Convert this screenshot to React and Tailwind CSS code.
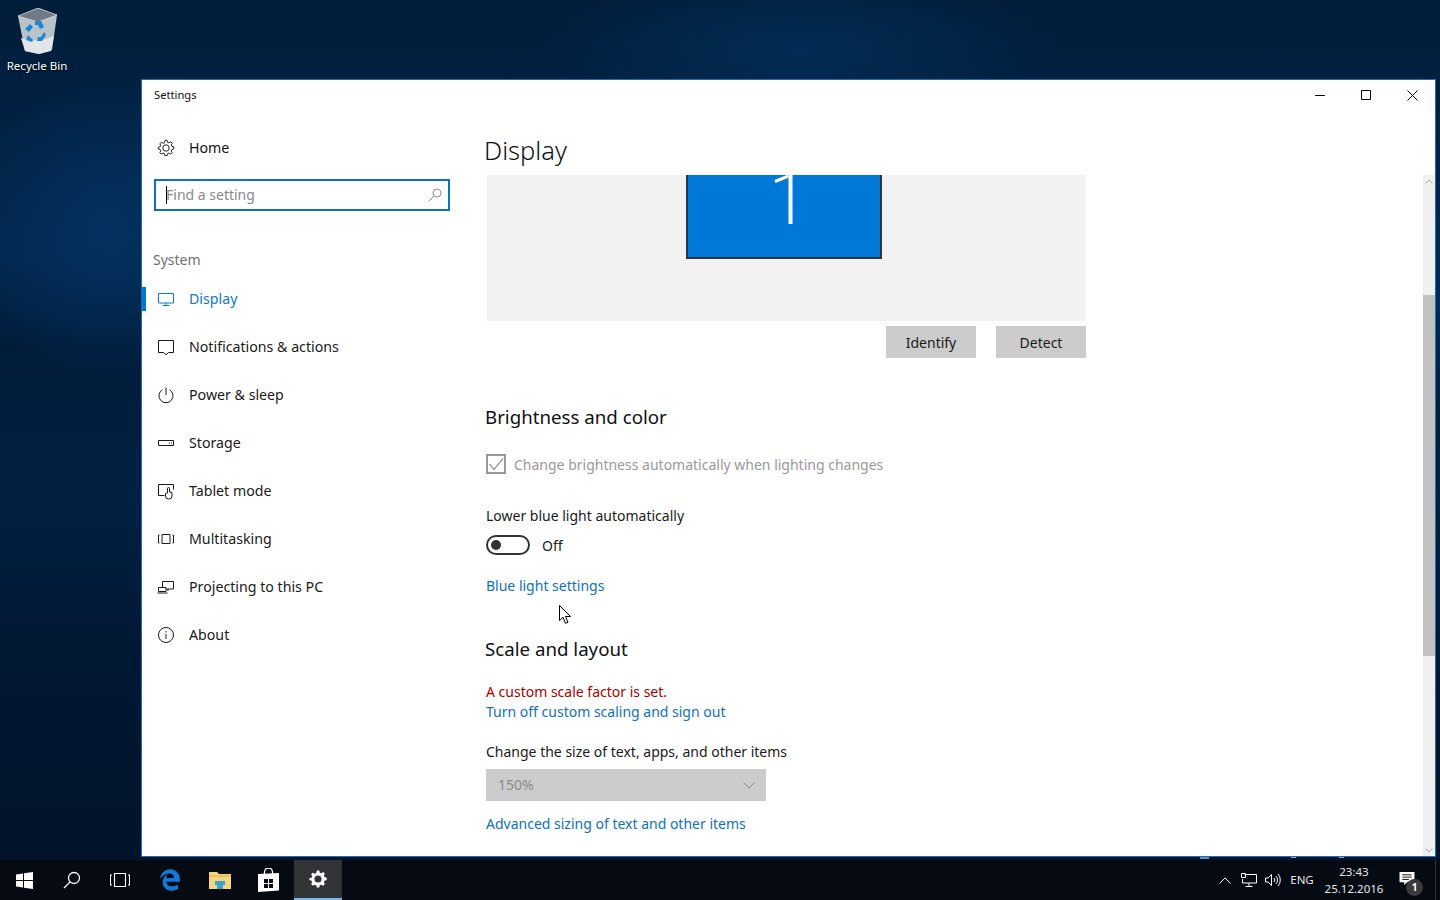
import React from "react";
import { FaEdgeLegacy } from "react-icons/fa";

const S = ({ children, w = 18, h = 18, vb = "0 0 18 18", cls = "" }) => (
  <svg width={w} height={h} viewBox={vb} fill="none" stroke="currentColor" strokeWidth="1" className={cls}>{children}</svg>
);

const gear = "M9 1.2l1.1.1.5 2 1.3.5 1.8-1 1.5 1.4-1 1.8.6 1.3 2 .5v2.2l-2 .5-.6 1.3 1 1.8-1.5 1.5-1.8-1-1.3.5-.5 2H7.9l-.5-2-1.3-.5-1.8 1-1.5-1.5 1-1.8-.6-1.3-2-.5V8.300l2-.5.6-1.300-1-1.800 1.500-1.400 1.800 1 1.300-.5.5-2z";

const icons = {
  display: <S><path d="M1.500 3.500h15v9.500h-15zM9 13v2.500M5.500 15.500h7" /></S>,
  notif: <S><path d="M1.500 2.500h15v12h-5l-2.500 2.200-2.500-2.200h-5z" /></S>,
  power: <S><path d="M9 1.500v7.500M5.500 3.700a7 7 0 1 0 7 0" /></S>,
  storage: <S><path d="M1.500 6.500h15v5h-15z" /><path d="M12 9h1M14 9h1" /></S>,
  tablet: <S><path d="M7.500 13.500h-6v-11h15v5" /><path d="M10.500 11V6.500a1 1 0 0 1 2 0V10l2.500.5v3.500a3 3 0 0 1-3 3h-.500a3 3 0 0 1-3-3v-2.500z" /></S>,
  multi: <S><path d="M5 4.500h8v9H5zM2.500 5h-1v8h1M15.500 5h1v8h-1" /></S>,
  project: <S><path d="M5.500 9V3.500h11V11H9M11 11v2" /><path d="M1.500 9.500h7.500v4H1.500zM.5 15h10" /></S>,
  about: <S><circle cx="9" cy="9" r="7.500" /><path d="M9 8v5M9 5v1.500" /></S>,
};

const nav = [
  ["display", "Display", true], ["notif", "Notifications & actions"], ["power", "Power & sleep"], ["storage", "Storage"],
  ["tablet", "Tablet mode"], ["multi", "Multitasking"], ["project", "Projecting to this PC"], ["about", "About"],
];

function NavItem({ icon, label, active }) {
  return (
    <div className={`relative flex h-12 items-center pl-[15px] text-[14.200px] ${active ? "text-[#0f78c8]" : "text-[#1a1a1a]"}`}>
      {active && <div className="absolute left-0 top-3 h-6 w-1 bg-[#0078d7]" />}
      <div className="flex w-[32px] shrink-0 items-center"><span className="w-[18px]">{icons[icon]}</span></div>
      <span>{label}</span>
    </div>
  );
}

const RecycleBin = () => (
  <svg width="42" height="46" viewBox="0 0 42 46">
    <path d="M2 8L22 0l19 7-5 35-13 4-14-3z" fill="#b9c2c9" />
    <path d="M2 8L22 0l19 7-19 7z" fill="#6f7a84" stroke="#d8dee3" strokeWidth=".7" />
    <path d="M5 30c10 4 22 3 33-2l-3 15-12 3-14-3z" fill="#e2e6e9" />
    <path d="M9 21l5-5 3 3-4 5zM19 13h6l3 6-4 2-2-4-3 0zM28 24l2 3-4 6h-5l1-4h3zM12 27l5 5-1 2-6-2z" fill="#1b86d8" />
  </svg>
);

function Taskbar() {
  return (
    <div className="flex h-10 shrink-0 items-stretch bg-[#050a13] text-white">
      <div className="flex w-12 items-center justify-center">
        <svg width="17" height="17" viewBox="0 0 17 17" fill="#fff"><path d="M0 2.500l7-1v6.500H0zM8 1.300l9-1.300v8H8zM0 9h7v6.500l-7-1zM8 9h9v8l-9-1.300z" /></svg>
      </div>
      <div className="flex w-12 items-center justify-center">
        <svg width="18" height="18" viewBox="0 0 18 18" fill="none" stroke="#fff" strokeWidth="1.300"><circle cx="11" cy="7" r="5.500" /><path d="M7 11l-6 6" /></svg>
      </div>
      <div className="flex w-12 items-center justify-center">
        <svg width="20" height="14" viewBox="0 0 20 14" fill="none" stroke="#fff" strokeWidth="1.100"><path d="M4.500.5h11v13h-11zM2 2H.5v10H2M18 2h1.500v10H18" /></svg>
      </div>
      <div className="flex w-[52px] items-center justify-center text-[#0f7ad8]"><FaEdgeLegacy size={22} /></div>
      <div className="flex w-12 items-center justify-center">
        <svg width="22" height="18" viewBox="0 0 22 18"><path d="M0 1h8l2 2h12v15H0z" fill="#f3d77e" /><path d="M0 4h22v2H0z" fill="#e8c158" /><path d="M6 10h10v4h-2v4H8v-4H6z" fill="#3ba3d4" /></svg>
      </div>
      <div className="flex w-[48px] items-center justify-center">
        <svg width="21" height="24" viewBox="0 0 21 24"><path d="M6.500 6V4a4 4 0 0 1 8 0v2" fill="none" stroke="#fff" strokeWidth="1.300" /><path d="M0 6l21-1v17.500L0 24z" fill="#fff" /><path d="M6 11h4v4H6zM11 11h4v4h-4zM6 16h4v4H6zM11 16h4v4h-4z" fill="#050a13" /></svg>
      </div>
      <div className="ml-[2px] flex w-12 items-center justify-center border-b-2 border-[#76b9ed] bg-[#333437]">
        <svg width="20" height="20" viewBox="0 0 18 18"><path d={gear} fill="#fff" /><circle cx="9" cy="9" r="3.200" fill="#333437" /></svg>
      </div>
      <div className="flex-1" />
      <div className="flex items-center text-[11.500px] text-[#e8e8e8]">
        <svg className="mr-[10px]" width="12" height="7" viewBox="0 0 12 7" fill="none" stroke="#fff"><path d="M.5 6.500l5.500-5.500 5.500 5.500" /></svg>
        <svg className="mr-[8px]" width="16" height="15" viewBox="0 0 16 15" fill="none" stroke="#fff"><path d="M3.500 1.500h12v8.500H1.500V6M8 10v3M4.500 13.500h7M.5.500h4v4h-4z" /></svg>
        <svg className="mr-[9px]" width="16" height="14" viewBox="0 0 16 14" fill="none" stroke="#fff"><path d="M.5 5h2.500l3.500-3.500v11L3 9H.5zM9 5a3 3 0 0 1 0 4M11 3a6 6 0 0 1 0 8M13 1a9 9 0 0 1 0 12" /></svg>
        <span className="mr-[12px] w-[24px] text-center">ENG</span>
        <div className="mr-[13px] flex w-[56px] flex-col items-center pb-[1px] leading-[17px]">
          <span>23:43</span><span>25.12.2016</span>
        </div>
        <div className="relative mr-[15px] h-10 w-[25px]">
          <svg className="absolute left-[4px] top-[12px]" width="16" height="14" viewBox="0 0 16 15"><path d="M0 0h16v11H8l-3 3v-3H0z" fill="#fff" /><path d="M3 3h10M3 5.500h10M3 8h7" stroke="#050a13" /></svg>
          <div className="absolute left-[11px] top-[19px] flex h-[17px] w-[17px] items-center justify-center rounded-full bg-[#3a3a3a] text-[10px] font-bold text-white">1</div>
        </div>
        <div className="h-full w-[5px] border-l border-[#333]" />
      </div>
    </div>
  );
}

const Heading = ({ children, cls }) => <h2 className={`-ml-[1px] text-[18.700px] leading-[28px] text-[#111] ${cls}`}>{children}</h2>;
const Link = ({ children, cls }) => <div className={`leading-[20px] text-[#0f72b8] ${cls}`}>{children}</div>;

export default function App() {
  return (
    <div className="relative flex h-[900px] w-[1440px] flex-col overflow-hidden text-[14px] [font-family:'Noto_Sans','Open_Sans',sans-serif]">
      <div className="relative flex-1 bg-[#011d3a] bg-[radial-gradient(ellipse_150px_150px_at_110px_230px,#03315f_0%,transparent_100%),radial-gradient(ellipse_260px_80px_at_800px_50px,#022c54_0%,transparent_100%),radial-gradient(ellipse_200px_120px_at_1440px_300px,#032b54_0%,transparent_100%),linear-gradient(180deg,#011d3a_0%,#02264c_30%,#011c3a_40%,#012042_58%,#011834_75%,#011329_100%)]">
        <div className="absolute left-0 top-[8px] flex w-[74px] flex-col items-center text-[11.500px] text-white [text-shadow:0_1px_2px_#000]">
          <RecycleBin />
          <span className="mt-[4px] leading-[16px]">Recycle Bin</span>
        </div>

        <div className="absolute left-[141px] top-[79px] flex h-[778px] w-[1295px] flex-col border border-[#1c6eb0] bg-white">
          <div className="flex h-[30px] shrink-0 items-center justify-between pl-[12px] text-[11.200px] text-[#111]">
            <span>Settings</span>
            <div className="flex h-full items-center">
              <div className="flex w-[46px] justify-center"><svg width="10" height="10" viewBox="0 0 10 10" stroke="#000"><path d="M0 5.500h10" /></svg></div>
              <div className="flex w-[46px] justify-center"><svg width="10" height="10" viewBox="0 0 10 10" stroke="#000" fill="none"><path d="M.5.500h9v9h-9z" /></svg></div>
              <div className="flex w-[46px] justify-center"><svg width="11" height="11" viewBox="0 0 11 11" stroke="#000"><path d="M.5.500l10 10M10.500.500l-10 10" /></svg></div>
            </div>
          </div>
          <div className="flex min-h-0 flex-1">
            <aside className="w-[342px] shrink-0 pt-[13px]">
              <div className="flex h-12 items-center pl-[15px] pt-[1px] text-[#111]">
                <svg className="mr-[14px]" width="18" height="18" viewBox="0 0 18 18" fill="none" stroke="#222"><path d={gear} /><circle cx="9" cy="9" r="3.200" /></svg>
                <span className="text-[14.200px]">Home</span>
              </div>
              <div className="ml-[12px] mt-[8px] flex h-8 w-[296px] items-center justify-between border-2 border-[#0f72b8] pl-[10px] pr-[6px] text-[#8a8a8a]">
                <div className="flex items-center"><span className="mr-[-1px] h-[18px] w-px bg-black" /><span className="-mt-[2px]">Find a setting</span></div>
                <svg width="14" height="14" viewBox="0 0 14 14" fill="none" stroke="#8d8d8d"><circle cx="9" cy="5" r="4" /><path d="M6 8l-5.500 5.500" /></svg>
              </div>
              <div className="ml-[11px] mt-[39px] leading-[20px] text-[#707070]">System</div>
              <nav className="mt-[5px]">
                {nav.map(([i, l, a]) => <NavItem key={l} icon={i} label={l} active={a} />)}
              </nav>
            </aside>
            <main className="flex min-w-0 flex-1 flex-col">
              <h1 className="h-[65px] shrink-0 pt-[20px] text-[25.500px] font-light leading-[40px] text-[#111]">Display</h1>
              <div className="flex min-h-0 flex-1">
                <div className="min-w-0 flex-1 overflow-hidden pl-[2px]">
                  <div className="relative ml-[1px] h-[146px] w-[598px] overflow-hidden bg-[#f2f2f2]">
                    <div className="absolute left-[199px] top-[-30px] flex h-[114px] w-[196px] border-2 border-[#2a3744] bg-[#0078d7]">
                      <svg className="ml-[84px] mt-[26px]" width="22" height="51" viewBox="0 0 22 51" fill="none"><path d="M18.500 0v51" stroke="#fff" strokeWidth="4" /><path d="M16.500 3L3 8.500" stroke="#fff" strokeWidth="3" /></svg>
                    </div>
                  </div>
                  <div className="mt-[5px] flex w-[600px] justify-end gap-5">
                    <button className="h-8 w-[90px] bg-[#cccccc] text-[#1a1a1a]">Identify</button>
                    <button className="h-8 w-[90px] bg-[#cccccc] text-[#1a1a1a]">Detect</button>
                  </div>
                  <Heading cls="mt-[45px]">Brightness and color</Heading>
                  <div className="mt-[23px] flex h-5 items-center text-[#999]">
                    <div className="mr-2 flex h-5 w-5 items-center justify-center border-2 border-[#999]">
                      <svg width="16" height="16" viewBox="0 0 16 16" fill="none" stroke="#999" strokeWidth="1.300"><path d="M1.500 8l4.500 5.500 9-11" /></svg>
                    </div>
                    <span>Change brightness automatically when lighting changes</span>
                  </div>
                  <div className="mt-[32px] leading-[20px] text-[#1a1a1a]">Lower blue light automatically</div>
                  <div className="mt-[9px] flex h-5 items-center text-[#1a1a1a]">
                    <div className="relative mr-3 h-5 w-11 rounded-full border-2 border-[#333]">
                      <div className="absolute left-[3px] top-[3px] h-[10px] w-[10px] rounded-full bg-[#333]" />
                    </div>
                    <span className="pt-[1px]">Off</span>
                  </div>
                  <Link cls="mt-[21px]">Blue light settings</Link>
                  <Heading cls="mt-[39px]">Scale and layout</Heading>
                  <div className="mt-[19px] leading-[20px] text-[#a80000]">A custom scale factor is set.</div>
                  <Link>Turn off custom scaling and sign out</Link>
                  <div className="mt-[20px] leading-[20px] text-[#1a1a1a]">Change the size of text, apps, and other items</div>
                  <div className="mt-[7px] flex h-8 w-[280px] items-center justify-between bg-[#cccccc] pl-[12px] pr-[11px] text-[#8a8a8a]">
                    <span className="-mt-[2px]">150%</span>
                    <svg width="12" height="7" viewBox="0 0 12 7" fill="none" stroke="#8a8a8a"><path d="M.5.500L6 6l5.500-5.500" /></svg>
                  </div>
                  <Link cls="mt-[13px]">Advanced sizing of text and other items</Link>
                </div>
                <div className="flex w-3 shrink-0 flex-col bg-[#f0f0f0]">
                  <div className="flex h-[120px] justify-center pt-[4px]"><svg width="8" height="5" viewBox="0 0 8 5" fill="none" stroke="#a8a8a8"><path d="M.5 4.500L4 1l3.500 3.500" /></svg></div>
                  <div className="h-[361px] bg-[#c2c2c2]" />
                  <div className="flex flex-1 items-end justify-center pb-[3px]"><svg width="8" height="5" viewBox="0 0 8 5" fill="none" stroke="#a8a8a8"><path d="M.5.500L4 4l3.500-3.500" /></svg></div>
                </div>
              </div>
            </main>
          </div>
        </div>

        <div className="absolute left-[1200px] top-[857px] h-[2px] w-[9px] bg-[#5f8db3]" />
        <div className="absolute left-[1291px] top-[857px] h-[1px] w-[5px] bg-[#8fb3cf]" />
        <div className="absolute left-[1339px] top-[857px] h-[1px] w-[5px] bg-[#8fb3cf]" />

        <div className="absolute left-[559px] top-[605px]">
          <svg width="13" height="20" viewBox="0 0 13 20"><path d="M.5.500v15l3.500-3.200 2.500 6 2.500-1-2.500-5.800h5z" fill="#fff" stroke="#000" /></svg>
        </div>
      </div>
      <Taskbar />
    </div>
  );
}
